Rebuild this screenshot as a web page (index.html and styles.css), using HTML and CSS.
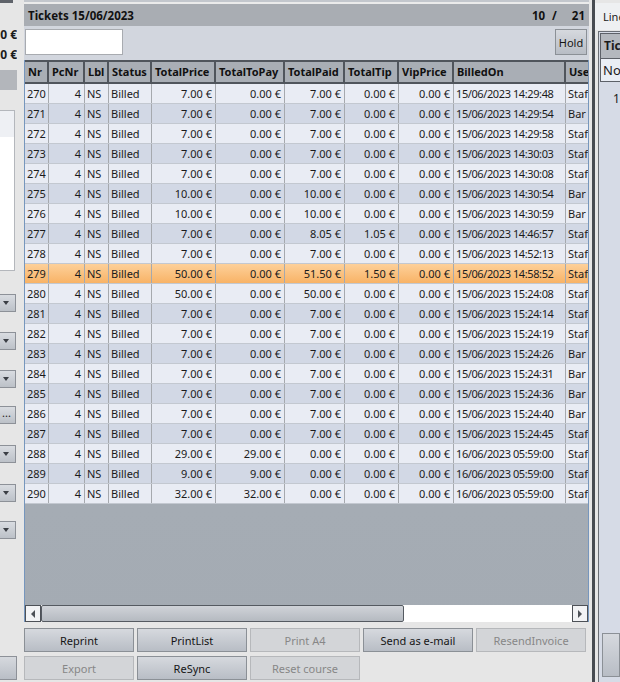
FILE: index.html
```html
<!DOCTYPE html>
<html lang="en">
<head>
    <meta charset="UTF-8">
    <title>Tickets</title>
    <link rel="stylesheet" href="styles.css">
</head>
<body>
<div class="window">

    <aside class="side">
        <div class="side-cap"></div>
        <div class="total first"><span>0.00 €</span></div>
        <div class="total"><span>0.00 €</span></div>
        <div class="side-box"></div>
        <div class="side-list"><div class="side-list-head"></div></div>
        <div class="combo c1"><span class="caret"></span></div>
        <div class="combo"><span class="caret"></span></div>
        <div class="combo"><span class="caret"></span></div>
        <div class="combo dots c4">...</div>
        <div class="combo c5"><span class="caret"></span></div>
        <div class="combo c5"><span class="caret"></span></div>
        <div class="combo c7"><span class="caret"></span></div>
        <div class="side-btn"></div>
    </aside>

    <main class="tickets">
        <div class="top-line"></div>
        <div class="titlebar">
            <span>Tickets 15/06/2023</span>
            <span class="pager"><span>10</span><span>/</span><span>21</span></span>
        </div>
        <div class="toolbar">
            <input class="search" type="text">
            <button class="btn hold">Hold</button>
        </div>

        <div class="grid">
            <div class="grid-rows">
                <div class="row head">
                    <div>Nr</div><div>PcNr</div><div>Lbl</div><div>Status</div><div>TotalPrice</div><div>TotalToPay</div><div>TotalPaid</div><div>TotalTip</div><div>VipPrice</div><div>BilledOn</div><div>User</div>
                </div>
                <div class="row">
                    <div>270</div><div class="r">4</div><div>NS</div><div>Billed</div><div class="r">7.00 €</div><div class="r">0.00 €</div><div class="r">7.00 €</div><div class="r">0.00 €</div><div class="r">0.00 €</div><div class="date">15/06/2023 14:29:48</div><div>Staff</div>
                </div>
                <div class="row alt">
                    <div>271</div><div class="r">4</div><div>NS</div><div>Billed</div><div class="r">7.00 €</div><div class="r">0.00 €</div><div class="r">7.00 €</div><div class="r">0.00 €</div><div class="r">0.00 €</div><div class="date">15/06/2023 14:29:54</div><div>Bar</div>
                </div>
                <div class="row">
                    <div>272</div><div class="r">4</div><div>NS</div><div>Billed</div><div class="r">7.00 €</div><div class="r">0.00 €</div><div class="r">7.00 €</div><div class="r">0.00 €</div><div class="r">0.00 €</div><div class="date">15/06/2023 14:29:58</div><div>Staff</div>
                </div>
                <div class="row alt">
                    <div>273</div><div class="r">4</div><div>NS</div><div>Billed</div><div class="r">7.00 €</div><div class="r">0.00 €</div><div class="r">7.00 €</div><div class="r">0.00 €</div><div class="r">0.00 €</div><div class="date">15/06/2023 14:30:03</div><div>Staff</div>
                </div>
                <div class="row">
                    <div>274</div><div class="r">4</div><div>NS</div><div>Billed</div><div class="r">7.00 €</div><div class="r">0.00 €</div><div class="r">7.00 €</div><div class="r">0.00 €</div><div class="r">0.00 €</div><div class="date">15/06/2023 14:30:08</div><div>Staff</div>
                </div>
                <div class="row alt">
                    <div>275</div><div class="r">4</div><div>NS</div><div>Billed</div><div class="r">10.00 €</div><div class="r">0.00 €</div><div class="r">10.00 €</div><div class="r">0.00 €</div><div class="r">0.00 €</div><div class="date">15/06/2023 14:30:54</div><div>Bar</div>
                </div>
                <div class="row">
                    <div>276</div><div class="r">4</div><div>NS</div><div>Billed</div><div class="r">10.00 €</div><div class="r">0.00 €</div><div class="r">10.00 €</div><div class="r">0.00 €</div><div class="r">0.00 €</div><div class="date">15/06/2023 14:30:59</div><div>Bar</div>
                </div>
                <div class="row alt">
                    <div>277</div><div class="r">4</div><div>NS</div><div>Billed</div><div class="r">7.00 €</div><div class="r">0.00 €</div><div class="r">8.05 €</div><div class="r">1.05 €</div><div class="r">0.00 €</div><div class="date">15/06/2023 14:46:57</div><div>Staff</div>
                </div>
                <div class="row">
                    <div>278</div><div class="r">4</div><div>NS</div><div>Billed</div><div class="r">7.00 €</div><div class="r">0.00 €</div><div class="r">7.00 €</div><div class="r">0.00 €</div><div class="r">0.00 €</div><div class="date">15/06/2023 14:52:13</div><div>Staff</div>
                </div>
                <div class="row selected">
                    <div>279</div><div class="r">4</div><div>NS</div><div>Billed</div><div class="r">50.00 €</div><div class="r">0.00 €</div><div class="r">51.50 €</div><div class="r">1.50 €</div><div class="r">0.00 €</div><div class="date">15/06/2023 14:58:52</div><div>Staff</div>
                </div>
                <div class="row">
                    <div>280</div><div class="r">4</div><div>NS</div><div>Billed</div><div class="r">50.00 €</div><div class="r">0.00 €</div><div class="r">50.00 €</div><div class="r">0.00 €</div><div class="r">0.00 €</div><div class="date">15/06/2023 15:24:08</div><div>Staff</div>
                </div>
                <div class="row alt">
                    <div>281</div><div class="r">4</div><div>NS</div><div>Billed</div><div class="r">7.00 €</div><div class="r">0.00 €</div><div class="r">7.00 €</div><div class="r">0.00 €</div><div class="r">0.00 €</div><div class="date">15/06/2023 15:24:14</div><div>Staff</div>
                </div>
                <div class="row">
                    <div>282</div><div class="r">4</div><div>NS</div><div>Billed</div><div class="r">7.00 €</div><div class="r">0.00 €</div><div class="r">7.00 €</div><div class="r">0.00 €</div><div class="r">0.00 €</div><div class="date">15/06/2023 15:24:19</div><div>Staff</div>
                </div>
                <div class="row alt">
                    <div>283</div><div class="r">4</div><div>NS</div><div>Billed</div><div class="r">7.00 €</div><div class="r">0.00 €</div><div class="r">7.00 €</div><div class="r">0.00 €</div><div class="r">0.00 €</div><div class="date">15/06/2023 15:24:26</div><div>Bar</div>
                </div>
                <div class="row">
                    <div>284</div><div class="r">4</div><div>NS</div><div>Billed</div><div class="r">7.00 €</div><div class="r">0.00 €</div><div class="r">7.00 €</div><div class="r">0.00 €</div><div class="r">0.00 €</div><div class="date">15/06/2023 15:24:31</div><div>Bar</div>
                </div>
                <div class="row alt">
                    <div>285</div><div class="r">4</div><div>NS</div><div>Billed</div><div class="r">7.00 €</div><div class="r">0.00 €</div><div class="r">7.00 €</div><div class="r">0.00 €</div><div class="r">0.00 €</div><div class="date">15/06/2023 15:24:36</div><div>Bar</div>
                </div>
                <div class="row">
                    <div>286</div><div class="r">4</div><div>NS</div><div>Billed</div><div class="r">7.00 €</div><div class="r">0.00 €</div><div class="r">7.00 €</div><div class="r">0.00 €</div><div class="r">0.00 €</div><div class="date">15/06/2023 15:24:40</div><div>Bar</div>
                </div>
                <div class="row alt">
                    <div>287</div><div class="r">4</div><div>NS</div><div>Billed</div><div class="r">7.00 €</div><div class="r">0.00 €</div><div class="r">7.00 €</div><div class="r">0.00 €</div><div class="r">0.00 €</div><div class="date">15/06/2023 15:24:45</div><div>Staff</div>
                </div>
                <div class="row">
                    <div>288</div><div class="r">4</div><div>NS</div><div>Billed</div><div class="r">29.00 €</div><div class="r">29.00 €</div><div class="r">0.00 €</div><div class="r">0.00 €</div><div class="r">0.00 €</div><div class="date">16/06/2023 05:59:00</div><div>Staff</div>
                </div>
                <div class="row alt">
                    <div>289</div><div class="r">4</div><div>NS</div><div>Billed</div><div class="r">9.00 €</div><div class="r">9.00 €</div><div class="r">0.00 €</div><div class="r">0.00 €</div><div class="r">0.00 €</div><div class="date">16/06/2023 05:59:00</div><div>Staff</div>
                </div>
                <div class="row">
                    <div>290</div><div class="r">4</div><div>NS</div><div>Billed</div><div class="r">32.00 €</div><div class="r">32.00 €</div><div class="r">0.00 €</div><div class="r">0.00 €</div><div class="r">0.00 €</div><div class="date">16/06/2023 05:59:00</div><div>Staff</div>
                </div>
            </div>
            <div class="hscroll">
                <div class="arrow"><span class="tri-left"></span></div>
                <div class="thumb"></div>
                <div class="track"></div>
                <div class="arrow"><span class="tri-right"></span></div>
            </div>
        </div>

        <div class="actions">
            <button class="btn">Reprint</button>
            <button class="btn">PrintList</button>
            <button class="btn" disabled>Print A4</button>
            <button class="btn">Send as e-mail</button>
            <button class="btn" disabled>ResendInvoice</button>
            <button class="btn" disabled>Export</button>
            <button class="btn">ReSync</button>
            <button class="btn" disabled>Reset course</button>
        </div>
    </main>

    <div class="splitter"></div>

    <section class="lines">
        <div class="lines-tab">Lines</div>
        <div class="lines-body">
            <div class="mini-grid">
                <div class="mini-head">Ticket</div>
                <div class="mini-row">No</div>
            </div>
            <div class="mini-count">1</div>
            <button class="btn lines-btn"></button>
        </div>
    </section>

</div>
</body>
</html>
```

FILE: styles.css
```css
body {
    margin: 0;
    background-color: #e6e6e6;
    color: #1b1b1b;
    font-family: "Noto Sans", "Open Sans", sans-serif;
    font-size: 11px;
    overflow: hidden;
}
.window {
    display: flex;
    width: 620px;
    height: 682px;
}

/* left column (cut off) */
.side {
    flex: none;
    width: 17px;
    display: flex;
    flex-direction: column;
    overflow: hidden;
}
.side-cap {
    height: 3px;
    width: 13px;
    background-color: #5f636a;
}
.total {
    display: flex;
    justify-content: flex-end;
    font-weight: bold;
    font-size: 12px;
    line-height: 20px;
    white-space: nowrap;
}
.total.first {
    margin-top: 22px;
}
.side-box {
    margin-top: 5px;
    height: 20px;
    background-color: #b3b6bb;
}
.side-list {
    margin-top: 20px;
    width: 15px;
    height: 161px;
    box-sizing: border-box;
    background-color: #fff;
    border: 1px solid #b4b7bc;
    border-left: none;
}
.side-list-head {
    height: 26px;
    background-color: #eef0f4;
}
.combo {
    margin-top: 20px;
    width: 16px;
    height: 18px;
    box-sizing: border-box;
    border: 1px solid #8d9198;
    border-left: none;
    background: linear-gradient(#d9dce1, #bcc1c8);
    display: flex;
    align-items: center;
    padding-left: 3px;
}
.combo.c1 {
    margin-top: 23px;
}
.combo.c4 {
    margin-top: 18px;
}
.combo.c5 {
    margin-top: 21px;
}
.combo.c7 {
    margin-top: 19px;
}
.combo.dots {
    padding-left: 2px;
    line-height: 12px;
    align-items: flex-start;
}
.caret {
    width: 0;
    height: 0;
    border-left: 3px solid transparent;
    border-right: 3px solid transparent;
    border-top: 4px solid #3b3f45;
}
.side-btn {
    margin-top: 117px;
    height: 24px;
    width: 17px;
    box-sizing: border-box;
    border: 1px solid #8d9198;
    border-left: none;
    background: linear-gradient(#d6d9de, #b9bec6);
}

/* tickets panel */
.tickets {
    flex: none;
    width: 565px;
    margin-left: 7px;
    display: flex;
    flex-direction: column;
}
.top-line {
    height: 4px;
    background: linear-gradient(#c3c7cd 0 2px, #ebebeb 2px);
}
.titlebar {
    height: 22px;
    background-color: #a9adb3;
    display: flex;
    align-items: center;
    justify-content: space-between;
    padding: 0 4px;
    font-weight: bold;
    font-size: 11.5px;
    color: #111;
}
.pager {
    display: flex;
    gap: 7px;
}
.pager span:last-child {
    margin-left: 8px;
}
.toolbar {
    height: 34px;
    box-sizing: border-box;
    background-color: #d2d6de;
    display: flex;
    align-items: flex-start;
    justify-content: space-between;
    padding: 3px 2px 0 1px;
}
.search {
    width: 98px;
    height: 26px;
    box-sizing: border-box;
    border: 1px solid #a8abb0;
    background-color: #fff;
    margin: 0;
}
.btn {
    margin: 0;
    padding: 0;
    height: 24px;
    box-sizing: border-box;
    border: 1px solid #8b9096;
    background: linear-gradient(#d6d9de, #b8bdc5);
    color: #151515;
    font-family: "Noto Sans", "Open Sans", sans-serif;
    font-size: 11px;
    white-space: nowrap;
    overflow: hidden;
}
.btn:disabled {
    background: #d3d5d8;
    border-color: #b6b8bb;
    color: #878787;
}
.hold {
    width: 32px;
    height: 26px;
}

/* data grid */
.grid {
    height: 562px;
    box-sizing: border-box;
    display: flex;
    flex-direction: column;
    border-left: 1px solid #7696bd;
    border-right: 1px solid #7696bd;
    background: linear-gradient(#a9b0b8, #a4abb3);
    overflow: hidden;
}
.grid-rows {
    flex: 1;
}
.row {
    display: grid;
    grid-template-columns: 24px 36px 24px 43px 64px 69px 60px 54px 55px 112px 60px;
    height: 20px;
    box-sizing: border-box;
    border-bottom: 1px solid #c3c8d0;
    background-color: #e9ecf4;
}
.row > div {
    border-right: 1px solid #a6a9ae;
    padding: 0 2px;
    line-height: 19px;
    white-space: nowrap;
    overflow: hidden;
}
.row > div.r {
    text-align: right;
    padding-right: 3px;
}
.row > div.date {
    letter-spacing: -0.4px;
}
.row.alt {
    background-color: #d2d8e5;
}
.row.selected {
    background: linear-gradient(#fdd09a, #f8b366);
}
.row.head {
    height: 24px;
    background-color: #a9aeb5;
    border-top: 2px solid #50555c;
    border-bottom: 2px solid #50555c;
    font-weight: bold;
    color: #111;
}
.row.head > div {
    border-right: 2px solid #50555c;
    padding-left: 3px;
    line-height: 20px;
}
.hscroll {
    height: 17px;
    display: flex;
    background-color: #fff;
}
.arrow {
    width: 16px;
    box-sizing: border-box;
    border: 1px solid #4d5157;
    background-color: #f2f3f5;
    display: flex;
    align-items: center;
    justify-content: center;
}
.tri-left {
    border-top: 4px solid transparent;
    border-bottom: 4px solid transparent;
    border-right: 4px solid #4d5157;
}
.tri-right {
    border-top: 4px solid transparent;
    border-bottom: 4px solid transparent;
    border-left: 4px solid #4d5157;
}
.thumb {
    width: 363px;
    box-sizing: border-box;
    border: 1px solid #555a61;
    border-radius: 2px;
    background: linear-gradient(#d0d3d8, #b5bac1);
}
.track {
    flex: 1;
}

.actions {
    margin-top: 6px;
    display: grid;
    grid-template-columns: repeat(5, 110px);
    column-gap: 3px;
    row-gap: 4px;
}

/* lines panel (cut off) */
.splitter {
    flex: none;
    width: 3px;
    margin-left: 3px;
    background-color: #474b51;
}
.lines {
    flex: 1;
    display: flex;
    flex-direction: column;
    overflow: hidden;
    white-space: nowrap;
}
.lines-tab {
    margin-top: 3px;
    height: 27px;
    line-height: 27px;
    padding-left: 8px;
    background-color: #eef0f2;
}
.lines-body {
    flex: 1;
    margin-left: 3px;
    margin-top: 1px;
    padding: 1px 0 5px 1px;
    display: flex;
    flex-direction: column;
    background-color: #d6dbe6;
    border-left: 1px solid #6a6e75;
    border-top: 1px solid #6a6e75;
}
.mini-grid {
    border: 1px solid #5d6168;
    border-right: none;
}
.mini-head {
    height: 24px;
    line-height: 24px;
    padding-left: 3px;
    background-color: #b4b8be;
    font-weight: bold;
    font-size: 12px;
    border-bottom: 1px solid #5d6168;
}
.mini-row {
    height: 22px;
    line-height: 22px;
    padding-left: 2px;
    background-color: #eaeef5;
    font-size: 13px;
}
.mini-count {
    margin-top: 8px;
    padding-left: 13px;
    font-size: 12px;
    color: #1b1b1b;
}
.lines-btn {
    margin-top: auto;
    margin-left: 2px;
    height: 44px;
}
```
